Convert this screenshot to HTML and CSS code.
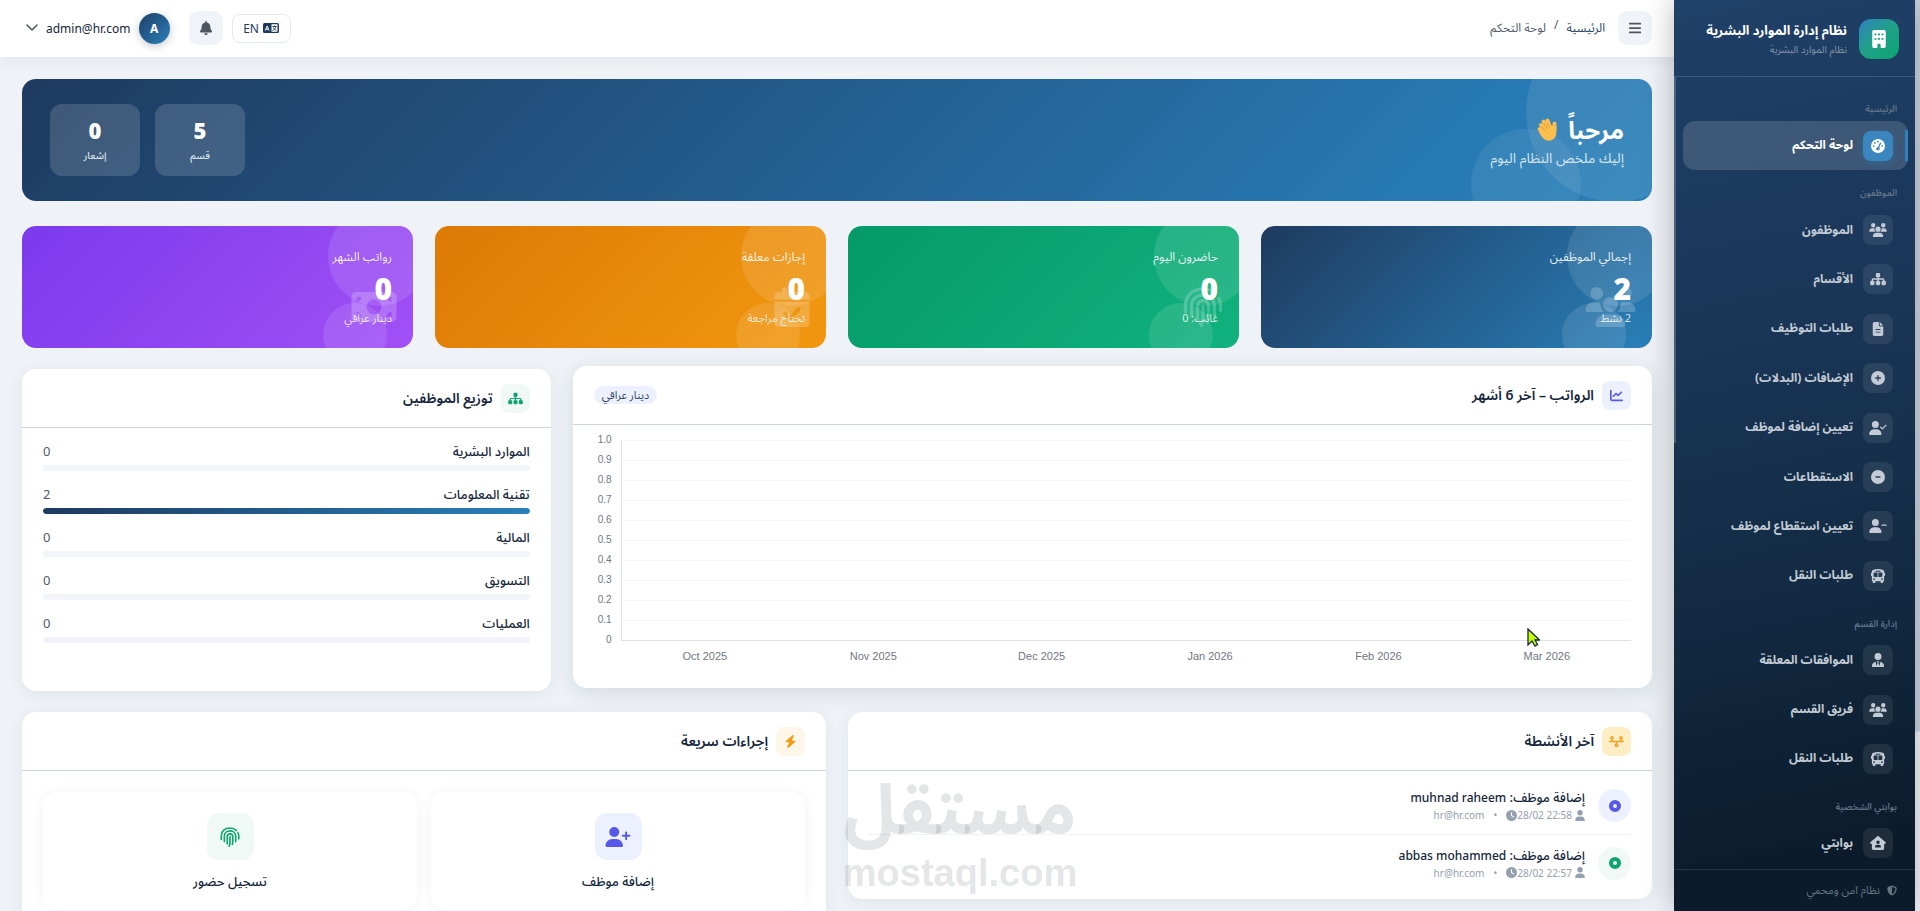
FILE: index.html
```html
<!DOCTYPE html>
<html lang="ar" dir="rtl">
<head>
<meta charset="utf-8">
<title>لوحة التحكم</title>
<link rel="stylesheet" href="styles.css">
</head>
<body>
<svg class="sprite" aria-hidden="true">
  <symbol id="i-building" viewBox="0 0 384 512"><path fill-rule="evenodd" d="M48 0C21.500 0 0 21.500 0 48v416c0 26.500 21.500 48 48 48h96v-80c0-26.500 21.500-48 48-48s48 21.500 48 48v80h96c26.500 0 48-21.500 48-48V48c0-26.500-21.500-48-48-48zM64 96h56v56H64zm100 0h56v56h-56zm100 0h56v56h-56zM64 224h56v56H64zm100 0h56v56h-56zm100 0h56v56h-56z"/></symbol>
  <symbol id="i-gauge" viewBox="0 0 512 512"><path fill-rule="evenodd" d="M0 256a256 256 0 1 1 512 0A256 256 0 1 1 0 256zM288 96a32 32 0 1 0-64 0 32 32 0 1 0 64 0zM256 416c35.300 0 64-28.700 64-64 0-17.400-6.900-33.100-18.100-44.600L366 161.700c5.300-12.100-.2-26.300-12.300-31.600s-26.300.2-31.600 12.300L257.900 288H256c-35.300 0-64 28.700-64 64s28.700 64 64 64zM176 144a32 32 0 1 0-64 0 32 32 0 1 0 64 0zM96 288a32 32 0 1 0 0-64 32 32 0 1 0 0 64zm352-32a32 32 0 1 0-64 0 32 32 0 1 0 64 0z"/></symbol>
  <symbol id="i-users" viewBox="0 0 640 512"><path d="M144 0a80 80 0 1 1 0 160A80 80 0 1 1 144 0zM512 0a80 80 0 1 1 0 160A80 80 0 1 1 512 0zM0 298.700C0 239.800 47.800 192 106.700 192h42.700c15.900 0 31 3.500 44.600 9.700c-1.300 7.200-1.900 14.700-1.900 22.300c0 38.200 16.800 72.500 43.300 96H21.300C9.600 320 0 310.400 0 298.700zM405.300 320c26.600-23.500 43.300-57.800 43.300-96c0-7.600-.7-15-1.900-22.300c13.600-6.300 28.700-9.700 44.600-9.700h42.700C592.200 192 640 239.800 640 298.700c0 11.800-9.600 21.300-21.300 21.300H405.300zM224 224a96 96 0 1 1 192 0 96 96 0 1 1-192 0zM128 485.300C128 411.700 187.700 352 261.300 352H378.700C452.300 352 512 411.700 512 485.300c0 14.700-11.900 26.700-26.700 26.700H154.700c-14.700 0-26.700-11.900-26.700-26.700z"/></symbol>
  <symbol id="i-sitemap" viewBox="0 0 576 512"><path d="M208 80c0-26.500 21.500-48 48-48h64c26.500 0 48 21.500 48 48v64c0 26.500-21.500 48-48 48h-8v40H464c30.900 0 56 25.100 56 56v32h8c26.500 0 48 21.500 48 48v64c0 26.500-21.500 48-48 48H464c-26.500 0-48-21.500-48-48V368c0-26.500 21.500-48 48-48h8V288c0-4.400-3.600-8-8-8H312v40h8c26.500 0 48 21.500 48 48v64c0 26.500-21.500 48-48 48H256c-26.500 0-48-21.500-48-48V368c0-26.500 21.500-48 48-48h8V280H112c-4.400 0-8 3.600-8 8v32h8c26.500 0 48 21.500 48 48v64c0 26.500-21.500 48-48 48H48c-26.500 0-48-21.500-48-48V368c0-26.500 21.500-48 48-48h8V288c0-30.900 25.100-56 56-56H264V192h-8c-26.500 0-48-21.500-48-48V80z"/></symbol>
  <symbol id="i-file" viewBox="0 0 384 512"><path fill-rule="evenodd" d="M64 0C28.700 0 0 28.700 0 64V448c0 35.300 28.700 64 64 64H320c35.300 0 64-28.700 64-64V160H256c-17.700 0-32-14.300-32-32V0H64zM256 0V128H384L256 0zM112 256H272a16 16 0 0 1 0 32H112a16 16 0 0 1 0-32zm0 96H272a16 16 0 0 1 0 32H112a16 16 0 0 1 0-32z"/></symbol>
  <symbol id="i-plus" viewBox="0 0 512 512"><path fill-rule="evenodd" d="M256 512A256 256 0 1 0 256 0a256 256 0 1 0 0 512zM232 344V280H168c-13.300 0-24-10.700-24-24s10.700-24 24-24h64V168c0-13.300 10.700-24 24-24s24 10.700 24 24v64h64c13.300 0 24 10.700 24 24s-10.700 24-24 24H280v64c0 13.300-10.700 24-24 24s-24-10.700-24-24z"/></symbol>
  <symbol id="i-minus" viewBox="0 0 512 512"><path fill-rule="evenodd" d="M256 512A256 256 0 1 0 256 0a256 256 0 1 0 0 512zM184 232H328c13.300 0 24 10.700 24 24s-10.700 24-24 24H184c-13.300 0-24-10.700-24-24s10.700-24 24-24z"/></symbol>
  <symbol id="i-user" viewBox="0 0 448 512"><path d="M224 256A128 128 0 1 0 224 0a128 128 0 1 0 0 256zm-45.700 48C79.800 304 0 383.800 0 482.300C0 498.700 13.300 512 29.700 512H418.300c16.400 0 29.700-13.300 29.700-29.700C448 383.800 368.200 304 269.700 304H178.300z"/></symbol>
  <symbol id="i-user-check" viewBox="0 0 640 512"><path d="M96 128a128 128 0 1 1 256 0A128 128 0 1 1 96 128zM0 482.300C0 383.800 79.800 304 178.300 304h91.400C368.200 304 448 383.800 448 482.300c0 16.400-13.300 29.700-29.700 29.700H29.700C13.300 512 0 498.700 0 482.300zM625 177L497 305c-9.400 9.400-24.600 9.400-33.900 0l-64-64c-9.400-9.400-9.400-24.600 0-33.900s24.600-9.400 33.900 0l47 47L591 143c9.400-9.400 24.600-9.400 33.900 0s9.400 24.600 0 33.900z"/></symbol>
  <symbol id="i-user-minus" viewBox="0 0 640 512"><path d="M96 128a128 128 0 1 1 256 0A128 128 0 1 1 96 128zM0 482.300C0 383.800 79.800 304 178.300 304h91.400C368.200 304 448 383.800 448 482.300c0 16.400-13.300 29.700-29.700 29.700H29.700C13.300 512 0 498.700 0 482.300zM472 200H616c13.300 0 24 10.700 24 24s-10.700 24-24 24H472c-13.300 0-24-10.700-24-24s10.700-24 24-24z"/></symbol>
  <symbol id="i-user-plus" viewBox="0 0 640 512"><path d="M96 128a128 128 0 1 1 256 0A128 128 0 1 1 96 128zM0 482.300C0 383.800 79.800 304 178.300 304h91.400C368.200 304 448 383.800 448 482.300c0 16.400-13.300 29.700-29.700 29.700H29.700C13.300 512 0 498.700 0 482.300zM504 312V248H440c-13.300 0-24-10.700-24-24s10.700-24 24-24h64V136c0-13.300 10.700-24 24-24s24 10.700 24 24v64h64c13.300 0 24 10.700 24 24s-10.700 24-24 24H552v64c0 13.300-10.700 24-24 24s-24-10.700-24-24z"/></symbol>
  <symbol id="i-user-tie" viewBox="0 0 448 512"><path d="M96 128a128 128 0 1 0 256 0A128 128 0 1 0 96 128zm94.500 200.200l18.600 31L175.800 483.100l-36-146.900c-2-8.100-9.800-13.400-17.900-11.300C51.900 342.400 0 405.800 0 481.300c0 17 13.700 30.700 30.700 30.700H417.300c17 0 30.700-13.700 30.700-30.700c0-75.500-51.900-138.900-121.900-156.400c-8.100-2-15.900 3.300-17.900 11.300l-36 146.900L238.900 359.200l18.600-31c6.400-10.700-1.300-24.200-13.700-24.200H204.200c-12.400 0-20.100 13.600-13.700 24.200z"/></symbol>
  <symbol id="i-bus" viewBox="0 0 512 512"><path fill-rule="evenodd" d="M256 0C390.400 0 480 35.200 480 80v48a32 32 0 0 1 32 32v64a32 32 0 0 1-32 32V416c0 17.700-14.300 32-32 32v32a32 32 0 0 1-32 32H384a32 32 0 0 1-32-32V448H160v32a32 32 0 0 1-32 32H96a32 32 0 0 1-32-32V448c-17.700 0-32-14.300-32-32V256a32 32 0 0 1-32-32V160a32 32 0 0 1 32-32V80C32 35.200 121.600 0 256 0zM128 128c-17.700 0-32 14.300-32 32v96c0 17.700 14.300 32 32 32H240V128zM272 288H384c17.700 0 32-14.300 32-32V160c0-17.700-14.300-32-32-32H272zM176 64a16 16 0 0 0 0 32H336a16 16 0 0 0 0-32zM112 400a32 32 0 1 0 0-64 32 32 0 1 0 0 64zm288 0a32 32 0 1 0 0-64 32 32 0 1 0 0 64z"/></symbol>
  <symbol id="i-house-user" viewBox="0 0 576 512"><path fill-rule="evenodd" d="M575.800 255.500c0 18-15 32.100-32 32.100h-32l.7 160.200c.2 35.500-28.500 64.300-64 64.300H128.100c-35.300 0-64-28.700-64-64V287.600H32c-18 0-32-14-32-32.100c0-9 3-17 10-24L266.400 8c7-7 15-8 22-8s15 2 21 7L564.800 231.500c8 7 12 15 11 24zM352 224a64 64 0 1 0-128 0 64 64 0 1 0 128 0zm-96 96c-44.200 0-80 35.800-80 80c0 8.800 7.200 16 16 16H384c8.800 0 16-7.200 16-16c0-44.200-35.800-80-80-80z"/></symbol>
  <symbol id="i-shield" viewBox="0 0 512 512"><path fill-rule="evenodd" d="M256 0c4.600 0 9.200 1 13.400 2.900L457.700 82.800c22 9.300 38.400 31 38.300 57.200c-.5 99.200-41.300 280.700-213.600 363.200c-16.700 8-36.100 8-52.800 0C57.300 420.700 16.500 239.200 16 140c-.1-26.200 16.300-47.900 38.300-57.200L242.700 2.900C246.800 1 251.400 0 256 0zm0 66.800V444.800C394 378 431.100 230.100 432 141.400L256 66.800z"/></symbol>
  <symbol id="i-bell" viewBox="0 0 448 512"><path d="M224 0c-17.700 0-32 14.300-32 32V51.200C119 66 64 130.600 64 208v18.800c0 47-17.300 92.400-48.500 127.600l-7.400 8.300c-8.400 9.400-10.400 22.900-5.300 34.400S19.400 416 32 416H416c12.600 0 24-7.400 29.200-18.900s3.100-25-5.300-34.400l-7.400-8.300C401.300 319.200 384 273.900 384 226.800V208c0-77.400-55-142-128-156.800V32c0-17.700-14.300-32-32-32zm45.300 493.300c12-12 18.700-28.300 18.700-45.300H160c0 17 6.700 33.300 18.700 45.300s28.300 18.700 45.300 18.700s33.300-6.700 45.300-18.700z"/></symbol>
  <symbol id="i-bars" viewBox="0 0 448 512"><path d="M32 64h384a32 32 0 0 1 0 64H32a32 32 0 0 1 0-64zm0 160h384a32 32 0 0 1 0 64H32a32 32 0 0 1 0-64zm0 160h384a32 32 0 0 1 0 64H32a32 32 0 0 1 0-64z"/></symbol>
  <symbol id="i-chevron" viewBox="0 0 12 8"><path d="M1 1l5 5 5-5" fill="none" stroke="currentColor" stroke-width="1.600" stroke-linecap="round" stroke-linejoin="round"/></symbol>
  <symbol id="i-lang" viewBox="0 0 16 10"><rect width="16" height="10" rx="1.500"/><path d="M2.300 7.500L4.200 3l1.900 4.500M3 6.200h2.400" fill="none" stroke="#fff" stroke-width="1"/><path d="M8.500 1.200h6v7.600h-6z" fill="#fff"/><path d="M9.300 3.500h4.400M11.500 2.500v1M13 3.500C12.500 5.500 11 7 9.500 7.600M10.200 4.600c.6 1.400 1.800 2.500 3.200 3" fill="none" stroke="#1e3a5f" stroke-width=".9"/></symbol>
  <symbol id="i-chart" viewBox="0 0 512 512"><path d="M64 64c0-17.700-14.300-32-32-32S0 46.300 0 64V400c0 44.200 35.800 80 80 80H480c17.700 0 32-14.300 32-32s-14.300-32-32-32H80c-8.800 0-16-7.200-16-16V64zm406.600 86.600c12.500-12.500 12.500-32.800 0-45.300s-32.800-12.500-45.300 0L320 210.700l-57.400-57.400c-12.500-12.500-32.800-12.500-45.300 0l-112 112c-12.500 12.500-12.500 32.800 0 45.300s32.800 12.500 45.300 0L240 221.300l57.400 57.400c12.500 12.500 32.800 12.500 45.300 0l128-128z"/></symbol>
  <symbol id="i-bolt" viewBox="0 0 448 512"><path d="M349.400 44.600c5.900-13.700 1.500-29.700-10.600-38.500s-28.600-8-39.900 1.800l-256 224c-10 8.800-13.600 22.900-8.900 35.300S50.700 288 64 288H175.500L98.600 467.400c-5.900 13.700-1.500 29.700 10.600 38.500s28.600 8 39.900-1.800l256-224c10-8.800 13.600-22.900 8.900-35.300s-16.600-20.700-30-20.700H272.500L349.400 44.600z"/></symbol>
  <symbol id="i-timeline" viewBox="0 0 640 512"><path fill-rule="evenodd" d="M128 72a24 24 0 1 1 0 48 24 24 0 1 1 0-48zm32 97.300c28.300-12.300 48-40.500 48-73.300a80 80 0 1 0-160 0c0 32.800 19.700 61 48 73.300V224H32a32 32 0 0 0 0 64H288v54.700c-28.300 12.300-48 40.500-48 73.300a80 80 0 1 0 160 0c0-32.800-19.700-61-48-73.300V288H608a32 32 0 0 0 0-64H544V169.300c28.300-12.300 48-40.500 48-73.300a80 80 0 1 0-160 0c0 32.800 19.700 61 48 73.300V224H160V169.300zM488 96a24 24 0 1 1 48 0 24 24 0 1 1-48 0zM320 392a24 24 0 1 1 0 48 24 24 0 1 1 0-48z"/></symbol>
  <symbol id="i-clock" viewBox="0 0 512 512"><path fill-rule="evenodd" d="M256 0a256 256 0 1 1 0 512A256 256 0 1 1 256 0zM232 120V256c0 8 4 15.500 10.700 20l96 64c11 7.400 25.900 4.400 33.300-6.700s4.400-25.900-6.700-33.300L280 243.200V120c0-13.300-10.700-24-24-24s-24 10.700-24 24z"/></symbol>
  <symbol id="i-finger" viewBox="0 0 24 24"><g fill="none" stroke="currentColor" stroke-width="2" stroke-linecap="round"><path d="M1.500 15v-4C1.500 5 6 1.200 12 1.200c3 0 5.700 1 7.600 2.800M22.500 14v-3c0-1.500-.3-3-.9-4"/><path d="M5.200 17.500V11c0-3.700 3-6.300 6.800-6.300s6.800 2.600 6.800 6.300v6.500"/><path d="M8.700 20V11.500c0-2 1.300-3.300 3.300-3.300s3.300 1.300 3.300 3.300V17c0 1.500-.2 2.700-.5 4"/><path d="M12 11.800V18c0 1.900-.3 3.500-1 5"/></g></symbol>
  <symbol id="i-calendar" viewBox="0 0 448 512"><path fill-rule="evenodd" d="M128 0c17.700 0 32 14.300 32 32V64H288V32a32 32 0 0 1 64 0V64h48c26.500 0 48 21.500 48 48v48H0V112C0 85.500 21.500 64 48 64H96V32c0-17.700 14.300-32 32-32zM0 192H448V464c0 26.500-21.500 48-48 48H48c-26.500 0-48-21.500-48-48zM329 297a24 24 0 0 0-34-34L200 367l-47-47a24 24 0 0 0-34 34l64 64a24 24 0 0 0 34 0z"/></symbol>
  <symbol id="i-money" viewBox="0 0 576 512"><path fill-rule="evenodd" d="M64 64C28.700 64 0 92.700 0 128V384c0 35.300 28.700 64 64 64H512c35.300 0 64-28.700 64-64V128c0-35.300-28.700-64-64-64zM64 320a64 64 0 0 1 64 64H64zM64 192V128h64a64 64 0 0 1-64 64zM448 384a64 64 0 0 1 64-64v64zM512 192a64 64 0 0 1-64-64h64zM288 160a96 96 0 1 1 0 192 96 96 0 1 1 0-192z"/></symbol>
  <symbol id="i-dot" viewBox="0 0 12 12"><circle cx="6" cy="6" r="4" fill="none" stroke="currentColor" stroke-width="4"/></symbol>
  <symbol id="i-wave" viewBox="0 0 20 24"><g stroke="#fbbf4f" stroke-width="3.800" stroke-linecap="round"><path d="M2.500 11l6 6M4 7l7 8M6.500 3.500l6 9M10.500 2.500l3.500 9M17.500 5.500V13"/></g><path d="M1.500 13l9-6 8.800 1v7c0 6-6 9-10 7.300C5.500 20.800 3.500 17 1.500 13z" fill="#fbbf4f"/><path d="M4.500 8.500l3.500 4.500M7 5.500l3.500 5.500M10.500 5l2 4.500" stroke="#e0912f" stroke-width=".8"/></symbol>
</svg>

<div class="app">
  <aside class="sidebar">
    <div class="brand">
      <span class="brand-logo"><svg><use href="#i-building"/></svg></span>
      <div>
        <div class="brand-name">نظام إدارة الموارد البشرية</div>
        <div class="brand-sub">نظام الموارد البشرية</div>
      </div>
    </div>
    <nav class="nav">
      <span class="nav-thumb"></span>
      <h6 class="nav-label">الرئيسية</h6>
      <a class="nav-item active" href="#"><span class="nav-icon"><svg><use href="#i-gauge"/></svg></span>لوحة التحكم</a>
      <h6 class="nav-label">الموظفون</h6>
      <a class="nav-item" href="#"><span class="nav-icon"><svg><use href="#i-users"/></svg></span>الموظفون</a>
      <a class="nav-item" href="#"><span class="nav-icon"><svg><use href="#i-sitemap"/></svg></span>الأقسام</a>
      <a class="nav-item" href="#"><span class="nav-icon"><svg><use href="#i-file"/></svg></span>طلبات التوظيف</a>
      <a class="nav-item" href="#"><span class="nav-icon"><svg><use href="#i-plus"/></svg></span>الإضافات (البدلات)</a>
      <a class="nav-item" href="#"><span class="nav-icon"><svg><use href="#i-user-check"/></svg></span>تعيين إضافة لموظف</a>
      <a class="nav-item" href="#"><span class="nav-icon"><svg><use href="#i-minus"/></svg></span>الاستقطاعات</a>
      <a class="nav-item" href="#"><span class="nav-icon"><svg><use href="#i-user-minus"/></svg></span>تعيين استقطاع لموظف</a>
      <a class="nav-item" href="#"><span class="nav-icon"><svg><use href="#i-bus"/></svg></span>طلبات النقل</a>
      <h6 class="nav-label">إدارة القسم</h6>
      <a class="nav-item" href="#"><span class="nav-icon"><svg><use href="#i-user-tie"/></svg></span>الموافقات المعلقة</a>
      <a class="nav-item" href="#"><span class="nav-icon"><svg><use href="#i-users"/></svg></span>فريق القسم</a>
      <a class="nav-item" href="#"><span class="nav-icon"><svg><use href="#i-bus"/></svg></span>طلبات النقل</a>
      <h6 class="nav-label">بوابتي الشخصية</h6>
      <a class="nav-item" href="#"><span class="nav-icon"><svg><use href="#i-house-user"/></svg></span>بوابتي</a>
    </nav>
    <div class="side-foot"><svg><use href="#i-shield"/></svg>نظام آمن ومحمي</div>
  </aside>

  <main class="main">
    <header class="topbar">
      <button class="icon-btn" type="button" aria-label="القائمة"><svg><use href="#i-bars"/></svg></button>
      <div class="crumbs"><a href="#">الرئيسية</a><span>/</span><span>لوحة التحكم</span></div>
      <button class="lang-btn" type="button"><svg><use href="#i-lang"/></svg>EN</button>
      <button class="icon-btn" type="button" aria-label="الإشعارات"><svg><use href="#i-bell"/></svg></button>
      <button class="user-btn" type="button"><span class="avatar">A</span><span>admin@hr.com</span><svg><use href="#i-chevron"/></svg></button>
    </header>

    <div class="content">
      <section class="hero">
        <div class="hero-text">
          <h1>مرحباً <svg><use href="#i-wave"/></svg></h1>
          <p>إليك ملخص النظام اليوم</p>
        </div>
        <div class="hero-tiles">
          <div class="tile"><b>5</b><span>قسم</span></div>
          <div class="tile"><b>0</b><span>إشعار</span></div>
        </div>
      </section>

      <section class="stats">
        <div class="stat blue"><span>إجمالي الموظفين</span><b>2</b><small>2 نشط</small><svg><use href="#i-users"/></svg></div>
        <div class="stat green"><span>حاضرون اليوم</span><b>0</b><small>غائب: 0</small><svg><use href="#i-finger"/></svg></div>
        <div class="stat orange"><span>إجازات معلقة</span><b>0</b><small>تحتاج مراجعة</small><svg><use href="#i-calendar"/></svg></div>
        <div class="stat purple"><span>رواتب الشهر</span><b>0</b><small>دينار عراقي</small><svg><use href="#i-money"/></svg></div>
      </section>

      <section class="row">
        <div class="card wide lifted">
          <div class="card-head"><span class="head-icon indigo"><svg><use href="#i-chart"/></svg></span><h2>الرواتب – آخر 6 أشهر</h2><span class="pill">دينار عراقي</span></div>
          <div class="chart" dir="ltr">
            <div class="y-axis"><span>1.0</span><span>0.9</span><span>0.8</span><span>0.7</span><span>0.6</span><span>0.5</span><span>0.4</span><span>0.3</span><span>0.2</span><span>0.1</span><span>0</span></div>
            <div class="plot"><i></i><i></i><i></i><i></i><i></i><i></i><i></i><i></i><i></i><i></i></div>
            <div class="x-axis"><span>Oct 2025</span><span>Nov 2025</span><span>Dec 2025</span><span>Jan 2026</span><span>Feb 2026</span><span>Mar 2026</span></div>
          </div>
          <svg class="cursor" viewBox="0 0 13 19"><path d="M1 1v16l4-4 3 5 2.500-1.500L8 12h4.500z" fill="#c6ff00" stroke="#16283a" stroke-width="1.300"/></svg>
        </div>
        <div class="card narrow">
          <div class="card-head"><span class="head-icon mint"><svg><use href="#i-sitemap"/></svg></span><h2>توزيع الموظفين</h2></div>
          <div class="depts">
            <div class="dept"><span>الموارد البشرية</span><em>0</em><div class="bar"></div></div>
            <div class="dept"><span>تقنية المعلومات</span><em>2</em><div class="bar"><div class="fill" style="width:100%"></div></div></div>
            <div class="dept"><span>المالية</span><em>0</em><div class="bar"></div></div>
            <div class="dept"><span>التسويق</span><em>0</em><div class="bar"></div></div>
            <div class="dept"><span>العمليات</span><em>0</em><div class="bar"></div></div>
          </div>
        </div>
      </section>

      <section class="row bottom">
        <div class="card half">
          <div class="card-head"><span class="head-icon amber"><svg><use href="#i-timeline"/></svg></span><h2>آخر الأنشطة</h2></div>
          <ul class="feed">
            <li><span class="feed-icon indigo"><svg><use href="#i-dot"/></svg></span><div><div class="feed-title">إضافة موظف: <bdi>muhnad raheem</bdi></div><div class="feed-meta"><svg><use href="#i-user"/></svg><time dir="ltr">28/02 22:58</time><svg class="clock"><use href="#i-clock"/></svg><span class="sep">•</span><span>hr@hr.com</span></div></div></li>
            <li><span class="feed-icon mint"><svg><use href="#i-dot"/></svg></span><div><div class="feed-title">إضافة موظف: <bdi>abbas mohammed</bdi></div><div class="feed-meta"><svg><use href="#i-user"/></svg><time dir="ltr">28/02 22:57</time><svg class="clock"><use href="#i-clock"/></svg><span class="sep">•</span><span>hr@hr.com</span></div></div></li>
          </ul>
          <div class="watermark"><span class="wm-ar">مستقل</span><span class="wm-en">mostaql.com</span></div>
        </div>
        <div class="card half">
          <div class="card-head"><span class="head-icon cream"><svg><use href="#i-bolt"/></svg></span><h2>إجراءات سريعة</h2></div>
          <div class="actions">
            <a class="action" href="#"><span class="action-icon indigo"><svg><use href="#i-user-plus"/></svg></span>إضافة موظف</a>
            <a class="action" href="#"><span class="action-icon mint"><svg><use href="#i-finger"/></svg></span>تسجيل حضور</a>
          </div>
        </div>
      </section>
    </div>
  </main>
  <div class="page-scroll"><span></span></div>
</div>
</body>
</html>
```
FILE: styles.css
```css
* { box-sizing: border-box; }
html, body { height: 100%; margin: 0; }
body {
  font-family: "Noto Sans", "Noto Sans Arabic", "Noto Kufi Arabic", "DejaVu Sans", sans-serif;
  font-size: 13px;
  color: #14263c;
  background: #eff3f8;
  overflow: hidden;
}
h1, h2, h6, p, ul { margin: 0; padding: 0; }
ul { list-style: none; }
a { color: inherit; text-decoration: none; }
button { font: inherit; color: inherit; border: 0; background: none; padding: 0; }
svg { fill: currentColor; display: block; }
.sprite { display: none; }

.app { display: grid; grid-template-columns: 5px 241px minmax(0, 1fr); height: 100vh; }
.page-scroll { order: -1; background: #f1f5f9; }
.page-scroll span { display: block; height: 732px; background: #cbd5e1; border-radius: 0 0 3px 3px; }

/* Sidebar */
.sidebar {
  position: relative; z-index: 2;
  display: flex; flex-direction: column;
  min-height: 0;
  color: #c3cbd5;
  background: linear-gradient(168deg, #1f4068 0%, #1a3657 35%, #122a42 65%, #0b1b2b 92%);
  box-shadow: 0 0 28px rgba(0, 0, 0, .28);
}
.brand {
  display: flex; align-items: center; gap: 12px;
  height: 77px; padding: 2px 16px 0;
  border-bottom: 1px solid rgba(255, 255, 255, .14);
}
.brand-logo {
  display: grid; place-items: center;
  width: 40px; height: 40px; border-radius: 12px;
  color: #fff;
  background: linear-gradient(135deg, #2f80c2, #22a08a 45%, #0aa56f);
}
.brand-logo svg { width: 16px; height: 18px; }
.brand-name { font-size: 13px; font-weight: 700; line-height: 20px; color: #fff; white-space: nowrap; }
.brand-sub { font-size: 10px; line-height: 18px; color: #8495a8; }
.nav { position: relative; flex: 1; display: flex; flex-direction: column; padding: 9px 7px 1px 9px; min-height: 0; }
.nav-thumb { position: absolute; left: 0; top: 0; width: 2px; height: 366px; background: rgba(255, 255, 255, .2); }
.nav-label { flex: none; height: 35px; padding: 15px 11px 0; font-size: 9px; line-height: 16px; font-weight: 600; color: #62748a; }
.nav-item {
  position: relative;
  flex: 1; display: flex; align-items: center; gap: 10px;
  padding: 0 15px; border-radius: 12px;
  font-size: 12px; font-weight: 700; white-space: nowrap;
}
.nav-icon { display: grid; place-items: center; width: 30px; height: 30px; border-radius: 8px; background: rgba(255, 255, 255, .08); }
.nav-icon svg { width: 18px; height: 14px; }
.nav-item.active { color: #fff; background: rgba(255, 255, 255, .15); }
.nav-item.active .nav-icon { background: #3c86c0; box-shadow: 0 3px 8px rgba(41, 128, 185, .4); }
.nav-item.active::before { content: ""; position: absolute; right: 0; top: 9px; bottom: 9px; width: 3px; background: #2f80bd; }
.side-foot {
  display: flex; align-items: center; gap: 7px;
  height: 42px; padding: 0 18px;
  border-top: 1px solid rgba(255, 255, 255, .1);
  font-size: 11px; color: #667482;
}
.side-foot svg { width: 10px; height: 11px; }

/* Top bar */
.main { min-width: 0; overflow: hidden; }
.topbar {
  display: flex; align-items: center;
  height: 57px; padding: 0 22px 1px;
  background: #fff; box-shadow: 0 2px 14px rgba(20, 38, 60, .08);
}
.icon-btn { display: grid; place-items: center; width: 34px; height: 34px; border-radius: 9px; background: #f0f4f9; color: #50565f; }
.icon-btn svg { width: 14px; height: 14px; }
.crumbs { display: flex; gap: 8px; margin-right: 13px; margin-left: auto; font-size: 12px; color: #4e5a6a; }
.crumbs a { color: #2b4468; }
.lang-btn {
  display: flex; align-items: center; justify-content: center; gap: 4px;
  width: 59px; height: 29px; margin-left: 9px;
  border: 1px solid #e4e8f0; border-radius: 8px;
  font-size: 12px; color: #1e3a5f;
}
.lang-btn svg { width: 16px; height: 10px; }
.user-btn { display: flex; align-items: center; gap: 8px; margin-right: 19px; padding-left: 4px; font-size: 12px; }
.user-btn svg { width: 12px; height: 8px; color: #4e5a6a; }
.avatar { display: grid; place-items: center; width: 31px; height: 31px; border-radius: 50%; color: #fff; font-weight: 700; background: linear-gradient(135deg, #1e3f67, #2980b9); box-shadow: 0 2px 8px rgba(20, 38, 60, .25); }
.content { padding: 22px; }

/* Welcome banner */
.hero {
  position: relative; overflow: hidden;
  display: flex; align-items: center; justify-content: space-between;
  height: 122px; padding: 0 28px; margin-bottom: 25px;
  border-radius: 14px; color: #fff;
  background: linear-gradient(135deg, #1e3a5f, #2779b3 85%, #2980b9);
}
.hero::before, .hero::after, .stat::before, .stat::after { content: ""; position: absolute; border-radius: 50%; background: rgba(255, 255, 255, .09); }
.hero::before { width: 180px; height: 180px; right: -54px; top: -57px; }
.hero::after { width: 110px; height: 110px; right: 71px; top: 50px; background: rgba(255, 255, 255, .07); }
.hero-text { position: relative; z-index: 1; }
.hero h1 { display: flex; align-items: center; gap: 11px; font-size: 24px; line-height: 36px; font-weight: 700; }
.hero h1 svg { width: 20px; height: 24px; }
.hero p { font-size: 14px; line-height: 20px; color: #d3e4ef; }
.hero-tiles { display: flex; gap: 15px; }
.tile { display: flex; flex-direction: column; align-items: center; justify-content: center; width: 90px; height: 72px; border-radius: 12px; background: rgba(255, 255, 255, .15); }
.tile b { font-size: 22px; line-height: 30px; font-weight: 900; }
.tile span { font-size: 10px; line-height: 20px; font-weight: 500; color: #dde4eb; }

/* Stats */
.stats { display: grid; grid-template-columns: repeat(4, 1fr); gap: 22px; margin-bottom: 21px; }
.stat { position: relative; overflow: hidden; display: flex; flex-direction: column; height: 122px; padding: 21px; border-radius: 14px; color: #fff; }
.stat::before { width: 100px; height: 100px; right: -15px; top: -20px; background: rgba(255, 255, 255, .11); }
.stat::after { width: 64px; height: 64px; right: 26px; bottom: -19px; background: rgba(255, 255, 255, .11); }
.stat span, .stat b, .stat small { position: relative; z-index: 1; }
.stat span { font-size: 12px; line-height: 20px; color: rgba(255, 255, 255, .9); }
.stat b { font-size: 30px; line-height: 44px; font-weight: 900; }
.stat small { font-size: 11px; line-height: 14px; color: rgba(255, 255, 255, .8); }
.stat svg { position: absolute; right: 16px; bottom: 21px; width: 51px; height: 40px; opacity: .2; }
.blue { background: linear-gradient(135deg, #1e3a5f, #2980b9); }
.green { background: linear-gradient(135deg, #059a68, #10b27d); }
.orange { background: linear-gradient(135deg, #dc7a06, #f2980f); }
.purple { background: linear-gradient(135deg, #7c3aed, #a150f5); }
.stat.green svg { width: 40px; }
.stat.orange svg { width: 36px; }
.stat.purple svg { width: 46px; }

/* Cards */
.row { display: grid; grid-template-columns: repeat(12, minmax(0, 1fr)); gap: 22px; margin-bottom: 21px; }
.wide { grid-column: span 8; }
.narrow { grid-column: span 4; }
.half { grid-column: span 6; }
.card { position: relative; background: #fff; border-radius: 14px; box-shadow: 0 3px 16px rgba(20, 38, 60, .07); }
.lifted { transform: translateY(-3px); box-shadow: 0 5px 22px rgba(20, 38, 60, .12); }
.bottom { align-items: start; }
.card-head { display: flex; align-items: center; gap: 8px; height: 59px; padding: 0 21px; border-bottom: 1px solid #cfd3da; }
.card-head h2 { font-size: 14px; font-weight: 600; }
.head-icon { display: grid; place-items: center; width: 29px; height: 29px; border-radius: 8px; }
.head-icon svg { width: 15px; height: 13px; }
.indigo { color: #5558e8; background: #edf1ff; }
.mint { color: #0da470; background: #f1f9f6; }
.amber { color: #f0a020; background: #ffedc4; }
.cream { color: #f39c12; background: #fff6ea; }
.pill { margin-right: auto; padding: 0 8px; border-radius: 9px; font-size: 11px; line-height: 18px; color: #2d4468; background: #edf1ff; }

/* Salary chart */
.chart { display: grid; grid-template-columns: auto minmax(0, 1fr); padding: 5px 21px 23px; font-family: "Liberation Sans", sans-serif; color: #6e7783; }
.y-axis { display: flex; flex-direction: column; width: 27px; padding-right: 9px; font-size: 10px; line-height: 20px; text-align: right; }
.plot { height: 201px; margin-top: 10px; border-left: 1px solid #e0e2e6; border-bottom: 1px solid #e0e2e6; }
.plot i { display: block; height: 20px; border-top: 1px solid #f5f6f7; }
.x-axis { grid-column: 2; display: grid; grid-template-columns: repeat(6, 1fr); margin-top: -3px; font-size: 11px; line-height: 18px; text-align: center; }
.cursor { position: absolute; right: 112px; bottom: 41px; width: 13px; height: 19px; }

/* Department shares */
.depts { padding: 14px 21px 34px; }
.dept { display: grid; grid-template-columns: 1fr auto; height: 43px; grid-template-rows: 23px 6px; }
.dept:last-child { height: 38px; }
.dept span, .dept em { line-height: 19px; font-size: 13px; font-weight: 500; font-style: normal; }
.dept em { font-weight: 400; color: #4e5a6a; }
.bar { grid-column: 1 / -1; height: 6px; border-radius: 3px; background: #f1f4f9; overflow: hidden; }
.fill { height: 6px; border-radius: 3px; background: linear-gradient(90deg, #1e3a5f, #2980b9); }

/* Recent activity */
.feed { padding: 6px 21px 8px; }
.feed li { display: flex; align-items: center; gap: 13px; height: 57px; }
.feed li + li { border-top: 1px solid #eff2f7; }
.feed-icon { display: grid; place-items: center; width: 33px; height: 33px; border-radius: 50%; }
.feed-icon svg { width: 12px; height: 12px; }
.feed-title { font-size: 13px; line-height: 18px; font-weight: 500; }
.feed-title bdi { font-size: 12px; }
.feed-meta { display: flex; align-items: center; font-size: 10px; line-height: 16px; color: #94a0b0; }
.feed-meta svg { width: 10px; height: 11px; margin-left: 3px; }
.feed-meta .clock { width: 11px; margin: 0; }
.sep { margin: 0 9px; }
.watermark {
  position: absolute; left: -3px; top: 48px; width: 230px;
  display: flex; flex-direction: column; align-items: center;
  color: rgba(120, 125, 135, .2); font-weight: 700; white-space: nowrap;
}
.wm-ar { font-size: 70px; line-height: 94px; }
.wm-en { font-family: "Liberation Sans", sans-serif; font-size: 38px; line-height: 38px; }

/* Quick actions */
.actions { display: grid; grid-template-columns: 1fr 1fr; gap: 14px; padding: 21px; }
.action { display: flex; flex-direction: column; align-items: center; height: 118px; padding-top: 21px; gap: 11px; border-radius: 14px; background: #fff; box-shadow: 0 0 14px rgba(20, 38, 60, .05); font-size: 13px; line-height: 20px; font-weight: 500; }
.action-icon { display: grid; place-items: center; width: 47px; height: 47px; border-radius: 12px; }
.action-icon svg { width: 26px; height: 20px; }
```
